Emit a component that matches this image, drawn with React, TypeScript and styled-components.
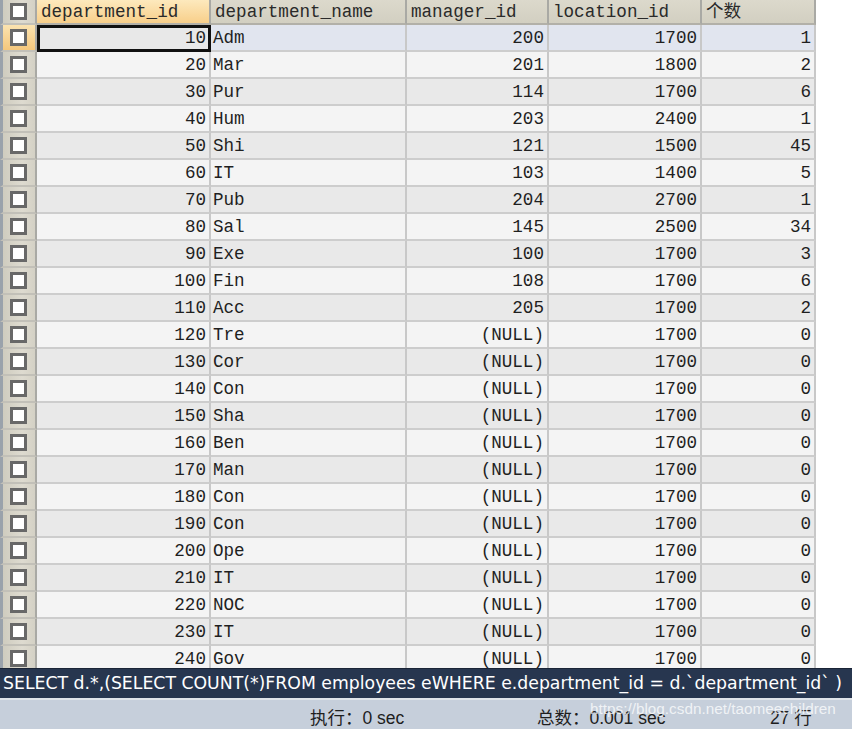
import React from "react";
import styled, { createGlobalStyle } from "styled-components";

const Global = createGlobalStyle`
  html, body { margin: 0; padding: 0; background: #ffffff; }
  body { width: 852px; height: 729px; overflow: hidden; }
`;

type Row = [number, string, number | null, number, number];

const rows: Row[] = [
  [10, "Adm", 200, 1700, 1],
  [20, "Mar", 201, 1800, 2],
  [30, "Pur", 114, 1700, 6],
  [40, "Hum", 203, 2400, 1],
  [50, "Shi", 121, 1500, 45],
  [60, "IT", 103, 1400, 5],
  [70, "Pub", 204, 2700, 1],
  [80, "Sal", 145, 2500, 34],
  [90, "Exe", 100, 1700, 3],
  [100, "Fin", 108, 1700, 6],
  [110, "Acc", 205, 1700, 2],
  [120, "Tre", null, 1700, 0],
  [130, "Cor", null, 1700, 0],
  [140, "Con", null, 1700, 0],
  [150, "Sha", null, 1700, 0],
  [160, "Ben", null, 1700, 0],
  [170, "Man", null, 1700, 0],
  [180, "Con", null, 1700, 0],
  [190, "Con", null, 1700, 0],
  [200, "Ope", null, 1700, 0],
  [210, "IT", null, 1700, 0],
  [220, "NOC", null, 1700, 0],
  [230, "IT", null, 1700, 0],
  [240, "Gov", null, 1700, 0],
];

const COLS = "37px 174px 196px 142px 153px 114px";

const Page = styled.div`
  width: 852px;
  height: 729px;
  display: flex;
  flex-direction: column;
  position: relative;
  overflow: hidden;
`;

const Grid = styled.div`
  height: 668px;
  overflow: hidden;
  display: flex;
  flex-direction: column;
`;

const RowLine = styled.div<{ $h: number }>`
  display: grid;
  grid-template-columns: ${COLS};
  height: ${(p) => p.$h}px;
  flex: none;
`;

const HeadCell = styled.div<{ $active?: boolean }>`
  box-sizing: border-box;
  border-right: 2px solid #a9a9a4;
  border-bottom: 2px solid #b2b0a8;
  background: ${(p) =>
    p.$active
      ? "linear-gradient(#fde9bd, #f8cf8a)"
      : "linear-gradient(#dcd9cc, #d2cfc1)"};
  font-family: "Liberation Mono", "Noto Sans CJK SC", monospace;
  font-size: 17.6px;
  color: #2a2a2a;
  padding-left: 4px;
  line-height: 24px;
  white-space: nowrap;
  overflow: hidden;
`;

const CheckCell = styled.div<{ $active?: boolean }>`
  box-sizing: border-box;
  border-left: 3px solid #9aa2ab;
  border-right: 2px solid #a9a9a4;
  border-bottom: 2px solid #c2c0b8;
  background: ${(p) =>
    p.$active
      ? "linear-gradient(#fbe3b0, #f5c77c)"
      : "linear-gradient(90deg, #cfccbf, #dedbd0 60%, #d4d1c5)"};
  display: flex;
  align-items: center;
  justify-content: center;
  padding-right: 2px;
`;

const Box = styled.div`
  width: 17px;
  height: 17px;
  flex: none;
  box-sizing: border-box;
  border: 3px solid #686868;
  background: #ffffff;
`;

const Cell = styled.div<{ $tone: "sel" | "light" | "dark"; $right?: boolean; $focus?: boolean }>`
  box-sizing: border-box;
  border-right: 2px solid #c8c8c8;
  border-bottom: 2px solid #cdcdcd;
  background: ${(p) =>
    p.$focus ? "#e8e8e8" : p.$tone === "sel" ? "#e1e5ef" : p.$tone === "light" ? "#f4f4f4" : "#e9e9e9"};
  font-family: "Liberation Mono", monospace;
  font-size: 17.6px;
  color: #1f1f1f;
  line-height: 27px;
  text-align: ${(p) => (p.$right ? "right" : "left")};
  padding: ${(p) => (p.$right ? "0 3px 0 0" : "0 0 0 2px")};
  white-space: nowrap;
  overflow: hidden;
  ${(p) => (p.$focus ? "outline: 3px solid #111; outline-offset: -3px; border-right-color: #111;" : "")}
`;

const SqlBar = styled.div`
  height: 29px;
  flex: none;
  background: #27364f;
  border-top: 1px solid #1a2436;
  color: #ffffff;
  font-family: "DejaVu Sans", Verdana, sans-serif;
  font-size: 17.3px;
  line-height: 29px;
  padding-left: 3px;
  white-space: nowrap;
  overflow: hidden;
`;

const StatusBar = styled.div`
  flex: 1;
  background: #c6cfdb;
  border-top: 2px solid #dfe4ea;
  display: grid;
  grid-template-columns: 310px 227px 233px 1fr;
  align-items: center;
  padding-top: 3px;
  font-family: "Liberation Sans", "Noto Sans CJK SC", sans-serif;
  font-size: 17.5px;
  color: #1e1e1e;
`;

const StatusItem = styled.span`
  white-space: nowrap;
`;

const Watermark = styled.div`
  position: absolute;
  left: 590px;
  top: 700px;
  font-family: "Liberation Sans", Arial, sans-serif;
  font-size: 15.3px;
  color: rgba(255, 255, 255, 0.75);
  white-space: nowrap;
`;

const headers = ["department_id", "department_name", "manager_id", "location_id", "个数"];

export default function App() {
  return (
    <Page>
      <Global />
      <Grid>
        <RowLine $h={25}>
          <CheckCell>
            <Box />
          </CheckCell>
          {headers.map((h, i) => (
            <HeadCell key={h} $active={i === 0}>
              {h}
            </HeadCell>
          ))}
        </RowLine>
        {rows.map((r, i) => {
          const tone: "sel" | "light" | "dark" = i === 0 ? "sel" : i % 2 === 1 ? "light" : "dark";
          return (
            <RowLine $h={27} key={i}>
              <CheckCell $active={i === 0}>
                <Box />
              </CheckCell>
              <Cell $tone={tone} $right $focus={i === 0}>
                {r[0]}
              </Cell>
              <Cell $tone={tone}>{r[1]}</Cell>
              <Cell $tone={tone} $right>
                {r[2] === null ? "(NULL)" : r[2]}
              </Cell>
              <Cell $tone={tone} $right>
                {r[3]}
              </Cell>
              <Cell $tone={tone} $right>
                {r[4]}
              </Cell>
            </RowLine>
          );
        })}
      </Grid>
      <SqlBar>SELECT d.*,(SELECT COUNT(*)FROM employees eWHERE e.department_id = d.`department_id` )</SqlBar>
      <StatusBar>
        <span />
        <StatusItem>执行：0 sec</StatusItem>
        <StatusItem>总数：0.001 sec</StatusItem>
        <StatusItem>27 行</StatusItem>
      </StatusBar>
      <Watermark>https://blog.csdn.net/taomeechildren</Watermark>
    </Page>
  );
}
